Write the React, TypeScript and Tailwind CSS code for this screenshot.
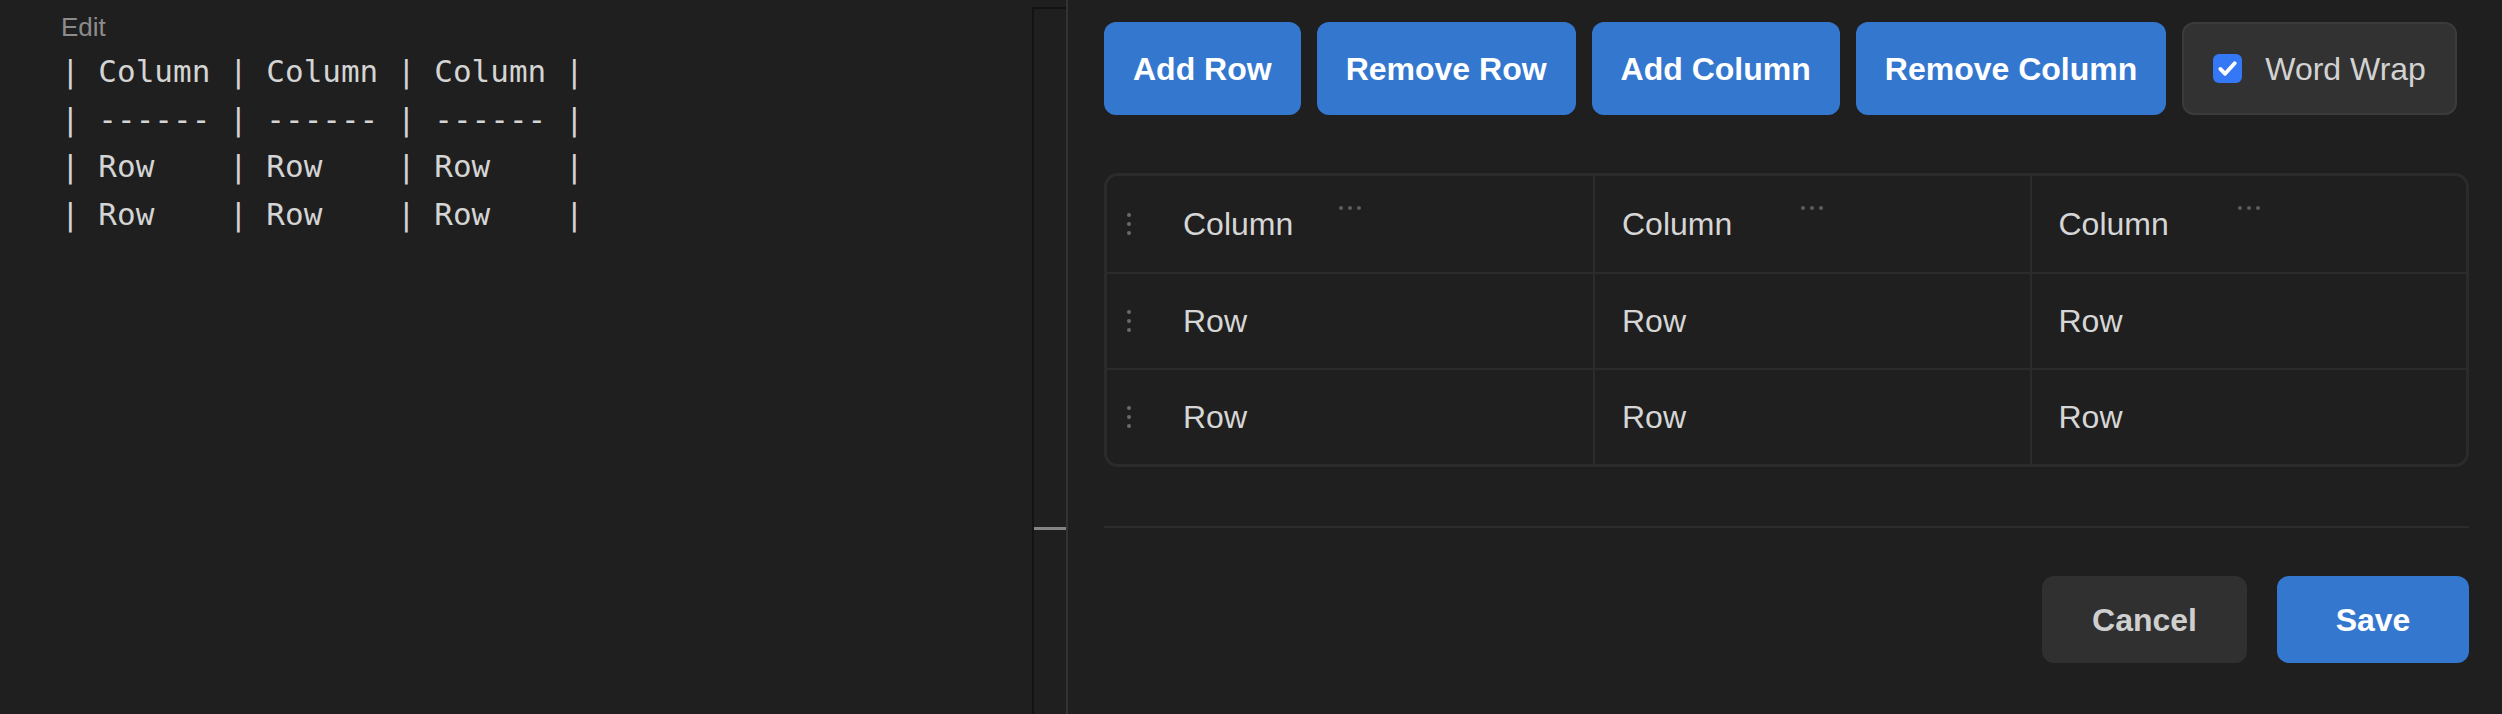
import React from "react";

const sans = { fontFamily: '"Liberation Sans", Arial, sans-serif' };

const markdown = [
  "| Column | Column | Column |",
  "| ------ | ------ | ------ |",
  "| Row    | Row    | Row    |",
  "| Row    | Row    | Row    |",
];

const rows = [
  ["Column", "Column", "Column"],
  ["Row", "Row", "Row"],
  ["Row", "Row", "Row"],
];

function DragHandle() {
  return (
    <div className="w-[49px] h-full flex flex-col justify-center gap-[5px] pl-[20px]">
      <span className="block w-[4px] h-[4px] rounded-full bg-[#6a6a6a]" />
      <span className="block w-[4px] h-[4px] rounded-full bg-[#6a6a6a]" />
      <span className="block w-[4px] h-[4px] rounded-full bg-[#6a6a6a]" />
    </div>
  );
}

function ColumnMenu() {
  return (
    <div className="absolute top-[30px] left-1/2 -translate-x-1/2 flex gap-[5px]">
      <span className="block w-[4px] h-[4px] rounded-full bg-[#5c5c5c]" />
      <span className="block w-[4px] h-[4px] rounded-full bg-[#5c5c5c]" />
      <span className="block w-[4px] h-[4px] rounded-full bg-[#5c5c5c]" />
    </div>
  );
}

export default function App() {
  const toolbar = ["Add Row", "Remove Row", "Add Column", "Remove Column"];

  return (
    <div className="w-[2502px] h-[714px] flex bg-[#1f1f1f] overflow-hidden" style={sans}>
      {/* editor pane */}
      <div className="flex-1 pl-[61px] pt-[8px]">
        <div className="text-[26px] text-[#8c8c8c]">Edit</div>
        <pre
          className="mt-[1px] text-[31px] leading-[47.6px] text-[#d4d4d4]"
          style={{ fontFamily: '"DejaVu Sans Mono", "Liberation Mono", monospace' }}
        >
          {markdown.join("\n")}
        </pre>
      </div>

      {/* gutter */}
      <div className="relative w-[34px] mt-[7px] border-l-2 border-t-2 border-[#131313]">
        <div className="absolute left-0 right-0 top-[518px] h-[3px] bg-[#858585]" />
      </div>
      <div className="w-[2px] bg-[#333333]" />

      {/* table editor */}
      <div className="w-[1434px] pl-[36px] pr-[33px] pt-[22px] flex flex-col">
        <div className="flex gap-4">
          {toolbar.map((label) => (
            <button
              key={label}
              className="h-[93px] px-[29px] rounded-[12px] bg-[#3477cf] text-white text-[32px] font-bold"
            >
              {label}
            </button>
          ))}
          <label className="h-[93px] pl-[29px] pr-[29px] flex items-center gap-[23px] rounded-[12px] bg-[#323232] border-2 border-[#3b3b3b] text-[32px] text-[#d2d2d2]">
            <span className="w-[29px] h-[29px] rounded-[6px] bg-[#3478f6] flex items-center justify-center">
              <svg width="23" height="23" viewBox="0 0 24 24" fill="none">
                <polyline points="4.5 12.5 9.5 17.5 19.5 6.5" stroke="white" strokeWidth="4" strokeLinecap="round" strokeLinejoin="round" />
              </svg>
            </span>
            Word Wrap
          </label>
        </div>

        <div className="mt-[58px] border-[3px] border-[#2b2b2b] rounded-[14px] overflow-hidden">
          {rows.map((row, ri) => (
            <div
              key={ri}
              className={`grid grid-cols-[486px_1fr_1fr] h-[96px] ${ri > 0 ? "border-t-2 border-[#2b2b2b]" : ""}`}
            >
              {row.map((cell, ci) => (
                <div
                  key={ci}
                  className={`relative flex items-center text-[32px] text-[#d6d6d6] ${ci > 0 ? "border-l-2 border-[#2b2b2b] pl-[27px]" : ""}`}
                >
                  {ci === 0 && <DragHandle />}
                  <span className={ci === 0 ? "pl-[27px]" : ""}>{cell}</span>
                  {ri === 0 && <ColumnMenu />}
                </div>
              ))}
            </div>
          ))}
        </div>

        <div className="mt-[59px] h-[2px] bg-[#2c2c2c]" />

        <div className="mt-[48px] flex justify-end gap-[30px]">
          <button className="w-[205px] h-[87px] rounded-[12px] bg-[#303030] text-[32px] font-bold text-[#cfcfcf]">
            Cancel
          </button>
          <button className="w-[192px] h-[87px] rounded-[12px] bg-[#3477cf] text-[32px] font-bold text-white">
            Save
          </button>
        </div>
      </div>
    </div>
  );
}
